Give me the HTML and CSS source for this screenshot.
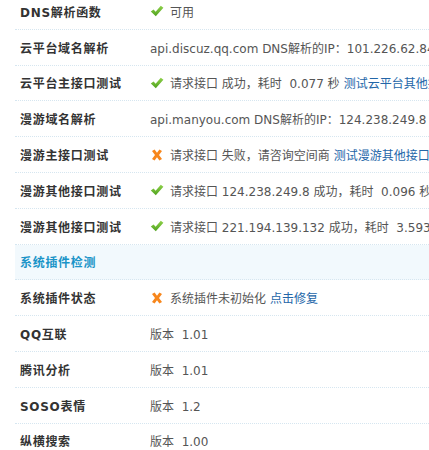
FILE: index.html
```html
<!DOCTYPE html>
<html>
<head>
    <meta charset="UTF-8">
    <title>运行环境检测</title>
    <link rel="stylesheet" href="styles.css">
</head>
<body>
    <svg class="defs" width="0" height="0">
        <defs>
            <linearGradient id="okfill" x1="0" y1="0" x2="0" y2="1">
                <stop offset="0" stop-color="#8fd14a"/>
                <stop offset="1" stop-color="#4fa21e"/>
            </linearGradient>
        </defs>
    </svg>
    <div class="tb">
        <div class="row">
            <div class="label">DNS解析函数</div>
            <div class="value"><svg class="ico" viewBox="0 0 14 12"><path class="ok" d="M0.8 6.6 L3.6 4.4 L5.6 6.8 L10.8 0.8 L13.4 2.8 L5.8 11.2 Z"/></svg>可用</div>
        </div>
        <div class="row">
            <div class="label">云平台域名解析</div>
            <div class="value">api.discuz.qq.com DNS解析的IP：101.226.62.84</div>
        </div>
        <div class="row">
            <div class="label">云平台主接口测试</div>
            <div class="value"><svg class="ico" viewBox="0 0 14 12"><path class="ok" d="M0.8 6.6 L3.6 4.4 L5.6 6.8 L10.8 0.8 L13.4 2.8 L5.8 11.2 Z"/></svg>请求接口 成功，耗时&nbsp;&nbsp;0.077 秒 <a href="#">测试云平台其他接口</a></div>
        </div>
        <div class="row">
            <div class="label">漫游域名解析</div>
            <div class="value">api.manyou.com DNS解析的IP：124.238.249.8</div>
        </div>
        <div class="row">
            <div class="label">漫游主接口测试</div>
            <div class="value"><svg class="ico" viewBox="0 0 14 12"><path class="fail" d="M2 2 L4.6 0.4 L7 3.8 L9.4 0.4 L12 2 L9 6 L12 10 L9.4 11.6 L7 8.2 L4.6 11.6 L2 10 L5 6 Z"/></svg>请求接口 失败，请咨询空间商 <a href="#">测试漫游其他接口</a></div>
        </div>
        <div class="row">
            <div class="label">漫游其他接口测试</div>
            <div class="value"><svg class="ico" viewBox="0 0 14 12"><path class="ok" d="M0.8 6.6 L3.6 4.4 L5.6 6.8 L10.8 0.8 L13.4 2.8 L5.8 11.2 Z"/></svg>请求接口 124.238.249.8 成功，耗时&nbsp;&nbsp;0.096 秒</div>
        </div>
        <div class="row">
            <div class="label">漫游其他接口测试</div>
            <div class="value"><svg class="ico" viewBox="0 0 14 12"><path class="ok" d="M0.8 6.6 L3.6 4.4 L5.6 6.8 L10.8 0.8 L13.4 2.8 L5.8 11.2 Z"/></svg>请求接口 221.194.139.132 成功，耗时&nbsp;&nbsp;3.593 秒</div>
        </div>
        <div class="row header">
            <div class="label">系统插件检测</div>
        </div>
        <div class="row">
            <div class="label">系统插件状态</div>
            <div class="value"><svg class="ico" viewBox="0 0 14 12"><path class="fail" d="M2 2 L4.6 0.4 L7 3.8 L9.4 0.4 L12 2 L9 6 L12 10 L9.4 11.6 L7 8.2 L4.6 11.6 L2 10 L5 6 Z"/></svg>系统插件未初始化 <a href="#">点击修复</a></div>
        </div>
        <div class="row">
            <div class="label">QQ互联</div>
            <div class="value">版本&nbsp;&nbsp;1.01</div>
        </div>
        <div class="row">
            <div class="label">腾讯分析</div>
            <div class="value">版本&nbsp;&nbsp;1.01</div>
        </div>
        <div class="row">
            <div class="label">SOSO表情</div>
            <div class="value">版本&nbsp;&nbsp;1.2</div>
        </div>
        <div class="row">
            <div class="label">纵横搜索</div>
            <div class="value">版本&nbsp;&nbsp;1.00</div>
        </div>
    </div>
</body>
</html>
```

FILE: styles.css
```css
html, body {
    overflow: hidden;
}
body {
    margin: 0;
    background-color: #fff;
    font: 12px "DejaVu Sans", "Noto Sans CJK SC", sans-serif;
    color: #555;
}
.defs {
    display: block;
    height: 0;
}
.tb {
    margin: -6px 0 0 15px;
    width: 700px;
}
.row {
    display: flex;
    align-items: center;
    height: 35.8px;
    box-sizing: border-box;
    border-bottom: 1px dotted #d6e6f0;
    white-space: nowrap;
}
.label {
    width: 130px;
    padding-left: 5px;
    font-weight: bold;
    color: #333;
    letter-spacing: 0.7px;
}
.value {
    display: flex;
    align-items: center;
}
.ico {
    width: 14px;
    height: 12px;
    margin-right: 6px;
}
.ok {
    fill: url(#okfill);
}
.fail {
    fill: #f7861b;
}
a {
    color: #2366a8;
    text-decoration: none;
    margin-left: 4px;
}
.header {
    background-color: #f2f9fd;
}
.header .label {
    color: #1a94c8;
}
```
